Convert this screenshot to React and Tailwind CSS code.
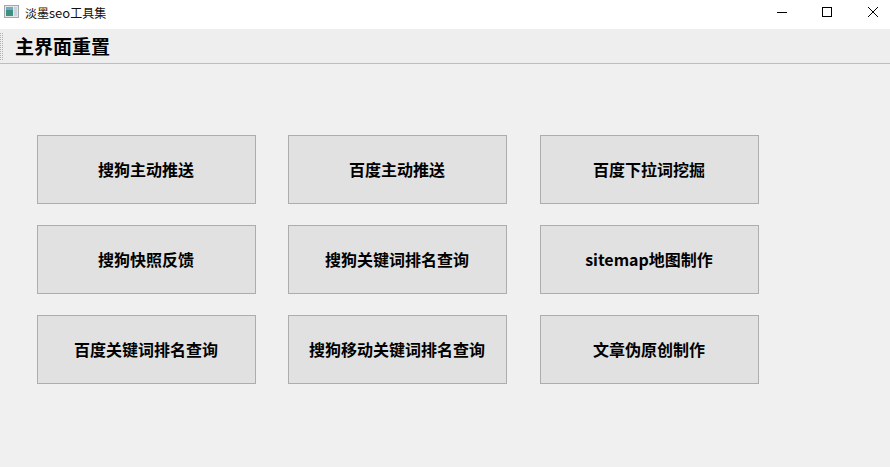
const rows = [
  ["搜狗主动推送", "百度主动推送", "百度下拉词挖掘"],
  ["搜狗快照反馈", "搜狗关键词排名查询", "sitemap地图制作"],
  ["百度关键词排名查询", "搜狗移动关键词排名查询", "文章伪原创制作"],
];

function AppIcon() {
  return (
    <svg width="16" height="16" viewBox="0 0 16 16" className="ml-[4px] mb-[5px]">
      <rect x="0.5" y="1.5" width="14" height="12" fill="#e4e6e8" stroke="#a4a8ac" />
      <rect x="2" y="3" width="7" height="9" fill="#3f8f80" />
      <rect x="2" y="3" width="7" height="3" fill="#6fa8c8" />
      <rect x="10" y="3" width="3" height="9" fill="#c9d3da" />
    </svg>
  );
}

export default function App() {
  return (
    <div className="w-[890px] h-[467px] overflow-hidden bg-[#f0f0f0] font-['Noto_Sans_CJK_SC','Liberation_Sans',sans-serif] text-black">
      <div className="h-[29px] bg-white flex items-center">
        <AppIcon />
        <span className="ml-[5px] mb-[5px] text-[12px] leading-none text-[#111]">
          淡墨<span className="text-[13px]">seo</span>工具集
        </span>
        <div className="ml-auto mr-[12px] h-full pt-[7px] flex items-start gap-x-[35px]">
          <svg width="10" height="10" viewBox="0 0 10 10"><path d="M0 5.5H10" stroke="#000" /></svg>
          <svg width="11" height="10" viewBox="0 0 11 10"><rect x="0.5" y="0.5" width="9" height="9" fill="none" stroke="#000" /></svg>
          <svg width="10" height="10" viewBox="0 0 10 10"><path d="M0 0L10 10M10 0L0 10" stroke="#000" strokeWidth="1" /></svg>
        </div>
      </div>
      <div className="h-[35px] bg-[#eeeeee] border-b border-[#bdbdbd] flex items-center">
        <div className="w-[3px] h-[27px] border-x border-dotted border-[#b0b0b0]" />
        <span className="ml-[12px] pb-[2px] text-[19px] leading-none font-bold">主界面重置</span>
      </div>
      <div className="pt-[71px] pl-[37px] grid grid-cols-[219px_220px_219px] gap-y-[21px] gap-x-[32px]">
        {rows.flat().map((t) => (
          <button key={t} className="w-[219px] h-[69px] bg-[#e1e1e1] border border-[#adadad] flex items-center justify-center text-[16px] font-bold leading-none pr-[1px] pb-[2px]">
            {t}
          </button>
        ))}
      </div>
    </div>
  );
}
